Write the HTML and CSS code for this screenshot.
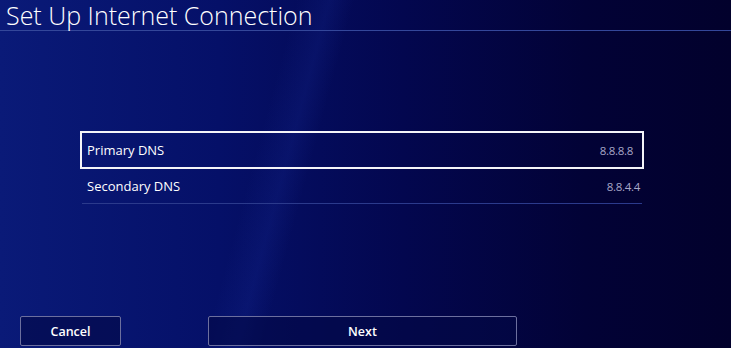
FILE: index.html
```html
<!DOCTYPE html>
<html lang="en">
  <head>
    <meta charset="UTF-8" />
    <meta name="viewport" content="width=device-width, initial-scale=1.0" />
    <title>Set Up Internet Connection</title>
    <link rel="stylesheet" href="styles.css">
  </head>
  <body>
    <div class="screen">
      <h1 class="title">Set Up Internet Connection</h1>

      <div class="list">
        <div class="row selected">
          <span class="label">Primary DNS</span>
          <span class="value">8.8.8.8</span>
        </div>
        <div class="row">
          <span class="label">Secondary DNS</span>
          <span class="value">8.8.4.4</span>
        </div>
      </div>

      <div class="footer">
        <button class="btn cancel">Cancel</button>
        <button class="btn next">Next</button>
      </div>
    </div>
  </body>
</html>
```

FILE: styles.css
```css
html,
body {
  margin: 0;
  height: 100%;
}
body {
  font-family: "Open Sans", "DejaVu Sans", sans-serif;
  color: #fff;
  background:
    linear-gradient(105deg, transparent 36%, rgba(40, 70, 200, 0.12) 40%, transparent 43%),
    linear-gradient(90deg, #0a1a78 0%, #051068 30%, #03074f 55%, #020236 80%, #02012c 100%);
  overflow: hidden;
}
.screen {
  display: flex;
  flex-direction: column;
  height: 348px;
}
.title {
  margin: 0;
  height: 30px;
  padding-left: 6px;
  font-size: 25px;
  font-weight: 300;
  line-height: 30px;
  border-bottom: 1px solid #34479a;
}
.list {
  margin: 100px 0 0 80px;
  width: 564px;
}
.row {
  display: flex;
  justify-content: space-between;
  align-items: center;
  height: 34px;
  margin: 0 2px;
  padding: 0 2px 0 5px;
  border-bottom: 1px solid #2b3a8c;
}
.row.selected {
  height: 34px;
  margin: 0;
  padding: 0 9px 0 5px;
  border: 2px solid #f4f4f8;
}
.label {
  font-size: 13px;
}
.value {
  font-size: 11.5px;
  color: #a8a8c8;
  letter-spacing: -0.3px;
}
.footer {
  display: flex;
  margin-top: auto;
  padding: 0 0 2px 20px;
  gap: 87px;
}
.btn {
  height: 30px;
  font-family: inherit;
  font-size: 12.5px;
  font-weight: 600;
  color: #fff;
  background: rgba(4, 8, 70, 0.6);
  border: 1px solid #6c6f9e;
  border-radius: 2px;
}
.cancel {
  width: 101px;
}
.next {
  width: 309px;
}
```
